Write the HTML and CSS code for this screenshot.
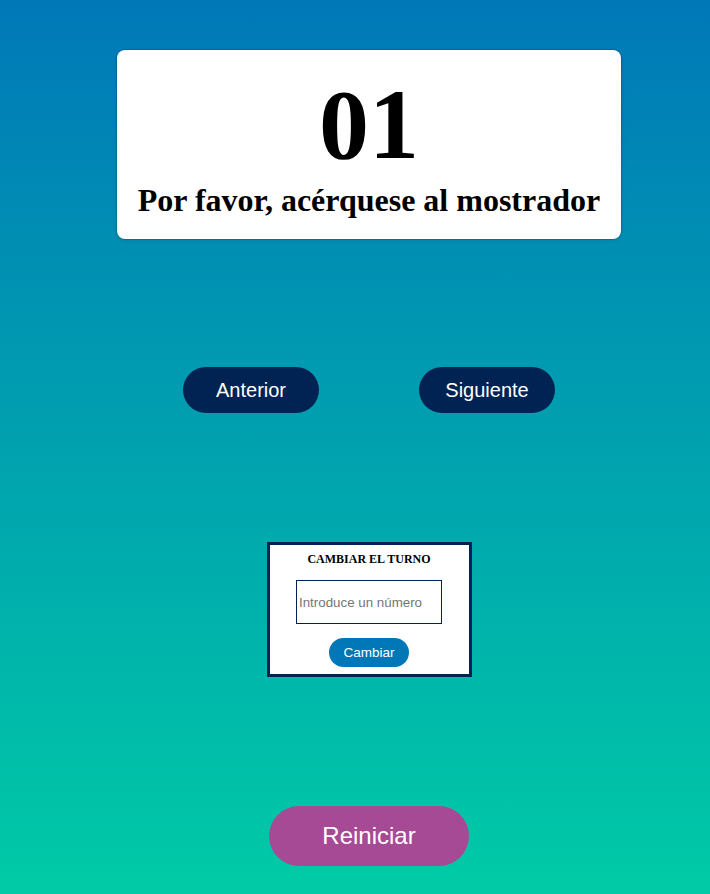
FILE: index.html
```html
<!DOCTYPE html>
<html lang="es">
<head>
<meta charset="utf-8">
<title>Turnos</title>
<link rel="stylesheet" href="styles.css">
</head>
<body>
<main class="page">
  <section class="card">
    <div class="number">01</div>
    <h1 class="message">Por favor, acérquese al mostrador</h1>
  </section>
  <div class="nav">
    <button class="nav-btn">Anterior</button>
    <button class="nav-btn">Siguiente</button>
  </div>
  <form class="change-box">
    <h2 class="change-title">CAMBIAR EL TURNO</h2>
    <input class="change-input" type="text" placeholder="Introduce un número">
    <button type="button" class="change-btn">Cambiar</button>
  </form>
  <button class="reset-btn">Reiniciar</button>
</main>
</body>
</html>
```

FILE: styles.css
```css
html, body {
  margin: 0;
  padding: 0;
}
body {
  min-height: 894px;
  background: linear-gradient(to bottom, #0078b8, #00cba6);
  font-family: "Liberation Serif", "Times New Roman", serif;
  overflow-x: hidden;
}
.page {
  box-sizing: border-box;
  padding: 50px 0 0 28px;
  display: flex;
  flex-direction: column;
  align-items: center;
  gap: 128px;
}
.card {
  box-sizing: border-box;
  width: 504px;
  height: 189px;
  background: #fff;
  border-radius: 8px;
  box-shadow: 0 0 0 1px rgba(0, 0, 0, 0.12), 0 1px 4px rgba(0, 0, 0, 0.15);
  padding: 17px 10px 20px;
  text-align: center;
}
.number {
  font-size: 100px;
  font-weight: bold;
  line-height: 115px;
  color: #000;
}
.message {
  margin: 0;
  font-size: 32px;
  font-weight: bold;
  line-height: 37px;
  color: #000;
  white-space: nowrap;
}
.nav {
  display: flex;
  gap: 100px;
}
.nav-btn {
  width: 136px;
  height: 46px;
  border: none;
  border-radius: 23px;
  background: #002354;
  color: #fff;
  font-family: "Liberation Sans", Arial, sans-serif;
  font-size: 20px;
  padding: 0;
}
.change-box {
  box-sizing: border-box;
  width: 205px;
  height: 135px;
  margin: 1px 0 0;
  border: 3px solid #002354;
  background: #fff;
  padding: 7px 0 7px;
  display: flex;
  flex-direction: column;
  align-items: center;
}
.change-title {
  margin: 0;
  font-size: 12px;
  font-weight: bold;
  line-height: 14px;
  color: #000;
}
.change-input {
  box-sizing: border-box;
  margin-top: 14px;
  width: 146px;
  height: 44px;
  border: 1px solid #002354;
  padding: 1px 2px;
  font-family: "Liberation Sans", Arial, sans-serif;
  font-size: 13.333px;
  color: #000;
  outline: none;
}
.change-input::placeholder {
  color: #757575;
}
.change-btn {
  margin-top: 14px;
  width: 80px;
  height: 29px;
  border: none;
  border-radius: 15px;
  background: #0077b6;
  color: #fff;
  font-family: "Liberation Sans", Arial, sans-serif;
  font-size: 13.5px;
  padding: 0;
}
.reset-btn {
  margin-top: 1px;
  width: 200px;
  height: 60px;
  border: none;
  border-radius: 30px;
  background: #a74a96;
  color: #fff;
  font-family: "Liberation Sans", Arial, sans-serif;
  font-size: 24px;
  padding: 0;
}
```
